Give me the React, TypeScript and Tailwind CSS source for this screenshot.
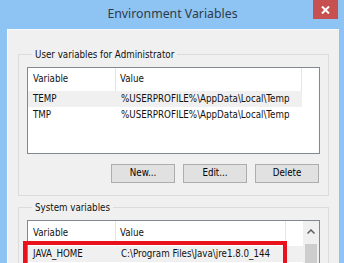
import React from "react";

type Row = { name: string; value: string; selected?: boolean };

const userRows: Row[] = [
  { name: "TEMP", value: "%USERPROFILE%\\AppData\\Local\\Temp", selected: true },
  { name: "TMP", value: "%USERPROFILE%\\AppData\\Local\\Temp" },
];

const ListHeader: React.FC<{ h: string }> = ({ h }) => (
  <div className={"flex items-center mr-[17px] " + h}>
    <div className="w-[88px] h-full flex items-center pl-[5px] border-r border-[#e5e5e5]">Variable</div>
    <div className="flex-1 h-full flex items-center pl-[4px] border-r border-[#e5e5e5]">Value</div>
  </div>
);

const Button: React.FC<{ label: string }> = ({ label }) => (
  <div className="w-[64px] h-[19px] flex items-center justify-center border border-[#adadad] bg-[#e1e1e1] text-black">
    {label}
  </div>
);

const GroupBox: React.FC<{ title: string; children: React.ReactNode; className?: string }> = (props) => (
  <fieldset className={"border border-[#dcdcdc] mx-[10px] px-[8px] " + (props.className ?? "")}>
    <legend className="ml-[5px] px-[3px] leading-[13px]">{props.title}</legend>
    {props.children}
  </fieldset>
);

export default function App() {
  return (
    <div
      className="relative w-[344px] h-[263px] overflow-hidden bg-[#8ec4f3] flex flex-col text-[9.7px] text-[#111] whitespace-nowrap"
      style={{ fontFamily: "'DejaVu Sans Condensed', 'Liberation Sans', sans-serif" }}
    >
      <div className="h-[29px] relative flex items-center justify-center shrink-0">
        <span className="text-[12.3px] text-[#2f3a47] pb-[1px] pl-[1px]" style={{ fontFamily: "'Noto Sans', 'Open Sans', sans-serif" }}>
          Environment Variables
        </span>
        <div className="absolute top-0 right-[6px] w-[25px] h-[19px] bg-[#c75050] flex items-center justify-center">
          <svg width="9" height="8" viewBox="0 0 9 8">
            <path d="M1 0.5 L8 7.5 M8 0.5 L1 7.5" stroke="white" strokeWidth="2" />
          </svg>
        </div>
      </div>
      <div className="flex-1 ml-[7px] mr-[5px] bg-[#f0f0f0] border-l border-t border-[#fbfbfb] pt-[18px]">
        <GroupBox title="User variables for Administrator" className="pb-[12px]">
          <div className="mt-[6px] h-[87px] border border-[#828790] bg-white">
            <ListHeader h="h-[23px]" />
            {userRows.map((r) => (
              <div key={r.name} className={"flex h-[16px] items-center mr-[17px] " + (r.selected ? "bg-[#f0f0f0]" : "")}>
                <div className="w-[88px] pl-[5px]">{r.name}</div>
                <div className="flex-1 pl-[5px]">{r.value}</div>
              </div>
            ))}
          </div>
          <div className="flex justify-end gap-[8px] mt-[10px] mr-[1px]">
            <Button label="New..." />
            <Button label="Edit..." />
            <Button label="Delete" />
          </div>
        </GroupBox>
        <GroupBox title="System variables" className="mt-[5px] h-[80px]">
          <div className="mt-[6px] h-[60px] border border-[#828790] bg-white flex">
            <div className="flex-1">
              <ListHeader h="h-[24px]" />
              <div className="flex h-[16px] items-center mt-[1px] bg-[#f0f0f0]">
                <div className="w-[88px] pl-[5px]">JAVA_HOME</div>
                <div className="flex-1 pl-[5px]">C:\Program Files\Java\jre1.8.0_144</div>
              </div>
            </div>
            <div className="w-[16px] bg-[#f0f0f0] flex flex-col items-center">
              <div className="h-[20px] flex items-center justify-center">
                <svg width="8" height="5" viewBox="0 0 8 5">
                  <path d="M0.5 4.5 L4 1 L7.5 4.5" stroke="#606060" strokeWidth="1.5" fill="none" />
                </svg>
              </div>
              <div className="mt-[3px] w-[12px] flex-1 bg-[#cdcdcd]" />
            </div>
          </div>
        </GroupBox>
      </div>
      <div className="absolute left-[23px] top-[241px] w-[264px] h-[30px] border-[4px] border-[#e8111c]" />
    </div>
  );
}
